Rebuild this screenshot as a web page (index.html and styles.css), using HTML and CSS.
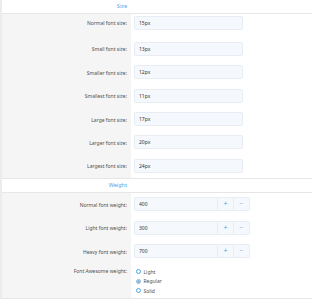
FILE: index.html
```html
<!DOCTYPE html>
<html>
  <head>
    <meta charset="utf-8" />
    <title>Style properties: Typography</title>
    <link rel="stylesheet" href="styles.css">
  </head>
  <body>
    <div class="block">
      <div class="block-header"><span class="header-label">Size</span><span></span></div>

      <div class="form-row first">
        <div class="row-label">Normal font size:</div>
        <div class="row-input"><input class="input" type="text" value="15px"></div>
      </div>
      <div class="form-row">
        <div class="row-label">Small font size:</div>
        <div class="row-input"><input class="input" type="text" value="13px"></div>
      </div>
      <div class="form-row">
        <div class="row-label">Smaller font size:</div>
        <div class="row-input"><input class="input" type="text" value="12px"></div>
      </div>
      <div class="form-row">
        <div class="row-label">Smallest font size:</div>
        <div class="row-input"><input class="input" type="text" value="11px"></div>
      </div>
      <div class="form-row">
        <div class="row-label">Large font size:</div>
        <div class="row-input"><input class="input" type="text" value="17px"></div>
      </div>
      <div class="form-row">
        <div class="row-label">Larger font size:</div>
        <div class="row-input"><input class="input" type="text" value="20px"></div>
      </div>
      <div class="form-row">
        <div class="row-label">Largest font size:</div>
        <div class="row-input"><input class="input" type="text" value="24px"></div>
      </div>

      <div class="block-header"><span class="header-label">Weight</span><span></span></div>

      <div class="form-row">
        <div class="row-label">Normal font weight:</div>
        <div class="row-input">
          <div class="input-group">
            <input class="input" type="text" value="400">
            <button class="step">+</button><button class="step">&minus;</button>
          </div>
        </div>
      </div>
      <div class="form-row">
        <div class="row-label">Light font weight:</div>
        <div class="row-input">
          <div class="input-group">
            <input class="input" type="text" value="300">
            <button class="step">+</button><button class="step">&minus;</button>
          </div>
        </div>
      </div>
      <div class="form-row">
        <div class="row-label">Heavy font weight:</div>
        <div class="row-input">
          <div class="input-group">
            <input class="input" type="text" value="700">
            <button class="step">+</button><button class="step">&minus;</button>
          </div>
        </div>
      </div>
      <div class="form-row radios">
        <div class="row-label">Font Awesome weight:</div>
        <div class="row-input">
          <ul class="choice-list">
            <li><span class="radio"></span>Light</li>
            <li><span class="radio checked"></span>Regular</li>
            <li><span class="radio"></span>Solid</li>
          </ul>
        </div>
      </div>
    </div>
  </body>
</html>
```

FILE: styles.css
```css
body {
  margin: 0;
  background: #fff;
  font-family: "Noto Sans", "Open Sans", sans-serif;
  font-size: 5px;
  color: #505050;
}

.block {
  border-left: 2px solid #ececec;
  border-bottom: 1px solid #e6e6e6;
}

.block-header {
  display: grid;
  grid-template-columns: 129px 1fr;
  height: 13px;
  line-height: 13px;
  background: #fff;
  border-bottom: 1px solid #e6e6e6;
  color: #47a7eb;
  font-size: 5.5px;
}
.block-header + .form-row { }
.form-row + .block-header { border-top: 1px solid #e6e6e6; }

.header-label {
  text-align: right;
  padding-right: 4px;
}

.form-row {
  display: grid;
  grid-template-columns: 129px 1fr;
}

.row-label {
  background: #f5f5f5;
  text-align: right;
  padding: 5px 4px 0 0;
  line-height: 14px;
}

.row-input {
  padding: 4.5px 0 4.9px 3px;
}
.form-row.first .row-label { padding-top: 2px; }
.form-row.first .row-input { padding-top: 2px; padding-bottom: 7.4px; }

.input {
  display: block;
  box-sizing: border-box;
  width: 109px;
  height: 14px;
  margin: 0;
  padding: 0 4px;
  border: 1px solid #e8edf3;
  border-radius: 2px;
  background: #f5f9fd;
  font-family: inherit;
  font-size: 5px;
  color: #333;
  outline: none;
}

.input-group {
  display: flex;
  width: 116px;
}
.input-group .input {
  flex: 1;
  width: auto;
  border-radius: 2px 0 0 2px;
}
.step {
  width: 16px;
  height: 14px;
  margin: 0;
  padding: 0;
  border: 1px solid #e8edf3;
  border-left: none;
  background: #f5f9fd;
  color: #47a7eb;
  font-family: inherit;
  font-size: 7px;
  line-height: 12px;
}
.step:last-child {
  border-radius: 0 2px 2px 0;
  color: #8fb3d2;
}

.radios .row-label { padding-top: 4px; line-height: 9.5px; }
.radios .row-input { padding-top: 4px; padding-bottom: 3px; }

.choice-list {
  list-style: none;
  margin: 0;
  padding: 0;
}
.choice-list li {
  display: flex;
  align-items: center;
  height: 9.5px;
  padding-left: 2px;
}
.radio {
  box-sizing: border-box;
  width: 5px;
  height: 5px;
  margin-right: 2.5px;
  border: 1px solid #47a7eb;
  border-radius: 50%;
  background: #fff;
}
.radio.checked {
  border-color: #8fb3d2;
  background: radial-gradient(circle, #8fb3d2 0 1px, #dbe8f4 1.2px);
}
```
